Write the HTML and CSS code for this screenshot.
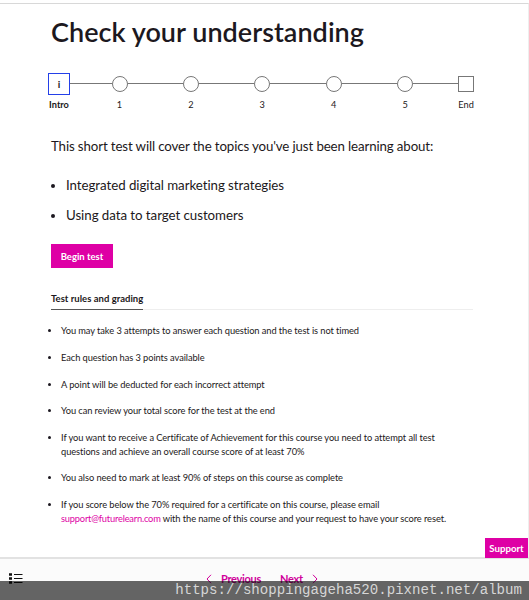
FILE: index.html
```html
<!DOCTYPE html>
<html lang="en">
<head>
  <meta charset="UTF-8">
  <meta name="viewport" content="width=device-width, initial-scale=1.0">
  <title>Check your understanding</title>
  <link rel="stylesheet" href="styles.css">
</head>
<body>
  <main class="content">
    <h1>Check your understanding</h1>

    <!-- Test progress -->
    <div class="stepper">
      <div class="step intro"><span class="marker">i</span><span class="label">Intro</span></div>
      <span class="line"></span>
      <div class="step"><span class="marker"></span><span class="label">1</span></div>
      <span class="line"></span>
      <div class="step"><span class="marker"></span><span class="label">2</span></div>
      <span class="line"></span>
      <div class="step"><span class="marker"></span><span class="label">3</span></div>
      <span class="line"></span>
      <div class="step"><span class="marker"></span><span class="label">4</span></div>
      <span class="line"></span>
      <div class="step"><span class="marker"></span><span class="label">5</span></div>
      <span class="line"></span>
      <div class="step end"><span class="marker"></span><span class="label">End</span></div>
    </div>

    <p class="lead">This short test will cover the topics you've just been learning about:</p>
    <ul class="topics">
      <li>Integrated digital marketing strategies</li>
      <li>Using data to target customers</li>
    </ul>

    <button class="begin">Begin test</button>

    <!-- Rules -->
    <div class="tabs">
      <h2 class="tab">Test rules and grading</h2>
    </div>
    <ul class="rules">
      <li>You may take 3 attempts to answer each question and the test is not timed</li>
      <li>Each question has 3 points available</li>
      <li>A point will be deducted for each incorrect attempt</li>
      <li>You can review your total score for the test at the end</li>
      <li>If you want to receive a Certificate of Achievement for this course you need to attempt all test<br>questions and achieve an overall course score of at least 70%</li>
      <li>You also need to mark at least 90% of steps on this course as complete</li>
      <li>If you score below the 70% required for a certificate on this course, please email<br><a href="#">support@futurelearn.com</a> with the name of this course and your request to have your score reset.</li>
    </ul>
  </main>

  <button class="support">Support</button>

  <footer class="bottom-nav">
    <svg class="menu" width="14" height="12" viewBox="0 0 14 12">
      <path d="M0 1.500h3M0 5.500h3M0 9.500h3" stroke="#111" stroke-width="2.600" />
      <path d="M5 1.500h8.500M5 5.500h8.500M5 9.500h8.500" stroke="#111" stroke-width="1.200" />
    </svg>
    <a href="#" class="prev">
      <svg width="6" height="10" viewBox="0 0 6 10"><path d="M5 .8L1 5l4 4.2" /></svg>
      Previous
    </a>
    <a href="#" class="next">
      Next
      <svg width="6" height="10" viewBox="0 0 6 10"><path d="M1 .8L5 5 1 9.200" /></svg>
    </a>
  </footer>

  <div class="watermark">https://shoppingageha520.pixnet.net/album</div>
</body>
</html>
```

FILE: styles.css
```css
* {
  box-sizing: border-box;
}

body {
  font-family: Lato, "Open Sans", sans-serif;
  font-variant-ligatures: none;
  margin: 0;
  height: 600px;
  position: relative;
  overflow: hidden;
  background: #fff;
  color: #1c1820;
}

.content {
  height: 558px;
  margin-top: 3px;
  padding: 12px 55px 0 51px;
  border-top: 1px solid #d8d8d8;
  border-right: 1px solid #eee;
}

h1 {
  margin: 0;
  font-size: 27px;
  line-height: 32px;
  font-weight: 600;
  letter-spacing: 0.03px;
  white-space: nowrap;
}

.stepper {
  display: grid;
  grid-template-columns: 22px 41.5px 16px repeat(4, 55.4px 16px) 45px 16px;
  margin: 25px 0 0 -3px;
}

.step {
  display: flex;
  flex-direction: column;
  align-items: center;
}

.marker {
  width: 16px;
  height: 16px;
  margin: 3px 0;
  flex-shrink: 0;
  border: 1px solid #777;
  border-radius: 50%;
}

.intro .marker {
  width: 22px;
  height: 22px;
  margin: 0;
  border: 1px solid #2440e8;
  border-radius: 0;
  text-align: center;
  font-size: 10px;
  line-height: 20px;
  font-weight: bold;
}

.end .marker {
  border-radius: 0;
}

.label {
  margin-top: 4px;
  font-size: 9.2px;
  line-height: 12px;
}

.intro .label {
  font-weight: bold;
}

.line {
  height: 1px;
  margin-top: 10px;
  background: #777;
}

.lead {
  margin: 25px 0 0;
  font-size: 13.3px;
  line-height: 20px;
  letter-spacing: -0.13px;
  white-space: nowrap;
}

.topics {
  margin: 20px 0 0;
  padding-left: 15px;
  font-size: 13.3px;
  line-height: 19.5px;
  letter-spacing: -0.05px;
}

.topics li {
  margin-bottom: 10px;
}

.begin {
  display: block;
  width: 62px;
  height: 24px;
  margin-top: 19px;
  padding: 0;
  border: none;
  background: #de00a5;
  color: #fff;
  font: bold 9.5px Lato, sans-serif;
}

.tabs {
  display: flex;
  margin-top: 24px;
  border-bottom: 1px solid #eee;
}

.tab {
  margin: 0 0 -1px;
  padding-bottom: 3px;
  border-bottom: 1px solid #555;
  font-size: 9.5px;
  line-height: 14px;
  letter-spacing: 0.02px;
}

.rules {
  margin: 14px 0 0;
  padding-left: 10px;
  font-size: 9.3px;
  line-height: 13.4px;
  letter-spacing: -0.08px;
  white-space: nowrap;
}

.rules li {
  margin-bottom: 13.4px;
}

.rules a {
  color: #de00a5;
  letter-spacing: -0.2px;
  text-decoration: none;
}

.support {
  position: absolute;
  top: 538px;
  right: 1px;
  width: 43px;
  height: 20px;
  padding: 0;
  border: none;
  background: #de00a5;
  color: #fff;
  font: bold 9.7px Lato, sans-serif;
}

.bottom-nav {
  display: flex;
  height: 43px;
  margin-top: -4px;
  padding: 14px 9px 0;
  border-top: 2px solid #e2e2e2;
  background: #fbfbfb;
  font-size: 11px;
  font-weight: bold;
  line-height: 12px;
  letter-spacing: -0.3px;
}

.bottom-nav a {
  display: flex;
  align-items: center;
  gap: 9px;
  height: 12px;
  color: #d0009a;
  text-decoration: none;
}

.bottom-nav a svg {
  fill: none;
  stroke: #d0009a;
}

.prev {
  margin-left: 183px;
}

.next {
  margin-left: 19px;
}

.watermark {
  position: absolute;
  left: 0;
  right: 0;
  bottom: 0;
  height: 19px;
  padding-right: 7px;
  background: rgba(0, 0, 0, 0.6);
  color: #d6d6d6;
  font: 14.1px/19px "Liberation Mono", monospace;
  text-align: right;
}
```
